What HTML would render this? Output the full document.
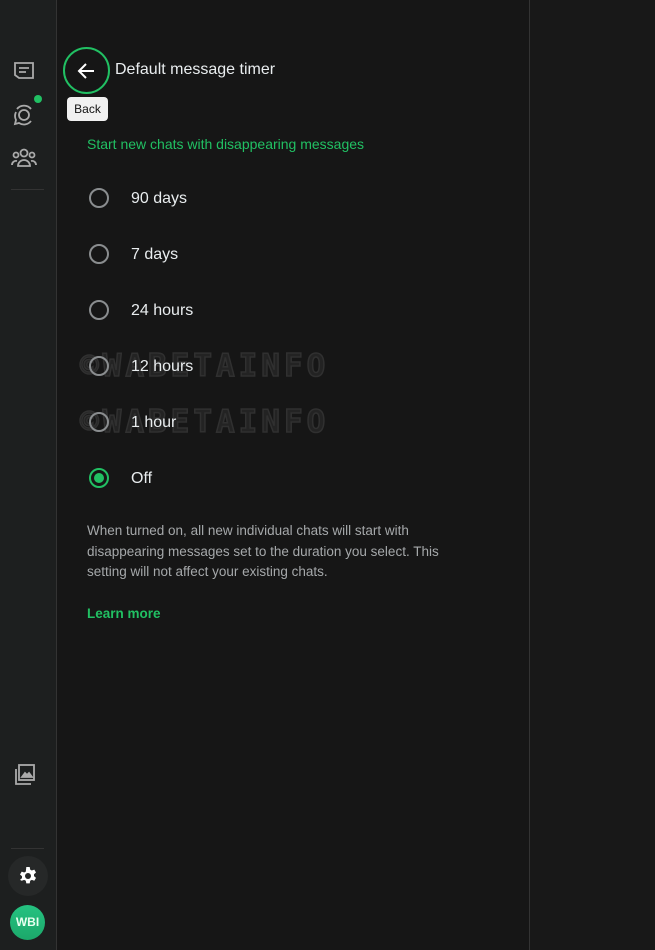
<!DOCTYPE html>
<html><head><meta charset="utf-8"><style>
*{margin:0;padding:0;box-sizing:border-box}
body{width:655px;height:950px;background:#161616;font-family:"Liberation Sans",sans-serif;position:relative;overflow:hidden;color:#e9edef}
.side{position:absolute;left:0;top:0;width:57px;height:950px;background:#1d1f1f;border-right:1px solid #333}
.right{position:absolute;left:529px;top:0;width:126px;height:950px;background:#181818;border-left:1px solid #333}
.ico{position:absolute}
.title{position:absolute;left:115px;top:61px;font-size:16px;color:#e9edef}
.back{position:absolute;left:63px;top:47px;width:47px;height:47px;border:2px solid #21c063;border-radius:50%}
.tip{position:absolute;left:67px;top:97px;width:41px;height:24px;background:#f0f0f0;border-radius:4px;color:#111;font-size:12px;text-align:center;line-height:24px}
.sub{position:absolute;left:87px;top:136px;font-size:14px;color:#21c063}
.opt{position:absolute;left:89px;font-size:16px}
.opt .r{position:absolute;left:0;top:0;width:20px;height:20px;border:2px solid #8a8d8f;border-radius:50%}
.opt .r.on{border-color:#21c063}
.opt .r.on::after{content:"";position:absolute;left:3px;top:3px;width:10px;height:10px;border-radius:50%;background:#21c063}
.opt span{position:absolute;left:42px;top:2px;white-space:nowrap}
.wm{position:absolute;left:80px;font-size:31px;font-weight:bold;letter-spacing:4px;color:#232323;-webkit-text-stroke:1.5px #303030;font-family:"DejaVu Sans Mono",monospace}
.desc{position:absolute;left:87px;top:521px;width:380px;font-size:13.5px;line-height:20.5px;color:#a5a8aa}
.learn{position:absolute;left:87px;top:606px;font-size:13.5px;font-weight:bold;color:#21c063}
</style></head><body>
<div class="side">
<svg class="ico" style="left:13px;top:61px" width="22" height="20" viewBox="0 0 22 20" fill="none" stroke="#aaa" stroke-width="1.8"><path d="M2 2h18v15H6l-4-3z"/><path d="M6 7h10M6 11h7"/></svg>
<svg class="ico" style="left:12px;top:103px" width="24" height="24" viewBox="0 0 24 24" fill="none" stroke="#aaa" stroke-width="1.8"><circle cx="12" cy="12" r="5"/><path d="M5 6a9 9 0 0 1 14 0M19 18a9 9 0 0 1-12 2l-4 1 1-4a9 9 0 0 1 0-8"/></svg>
<div class="ico" style="left:34px;top:95px;width:8px;height:8px;border-radius:50%;background:#21c063"></div>
<svg class="ico" style="left:10px;top:147px" width="28" height="22" viewBox="0 0 28 22" fill="none" stroke="#aaa" stroke-width="1.8"><circle cx="14" cy="6" r="3.5"/><circle cx="6" cy="8" r="2.5"/><circle cx="22" cy="8" r="2.5"/><path d="M8 19a6 6 0 0 1 12 0zM2 18a4 4 0 0 1 5-4M26 18a4 4 0 0 0-5-4"/></svg>
<div class="ico" style="left:11px;top:189px;width:33px;height:1px;background:#333"></div>
<svg class="ico" style="left:14px;top:764px" width="22" height="22" viewBox="0 0 22 22" fill="none" stroke="#aaa" stroke-width="1.8"><rect x="5" y="1" width="15" height="15"/><path d="M2 5v15h15"/><path d="M8 13l3-4 2 2 2-2 3 4z" fill="#aaa"/></svg>
<div class="ico" style="left:11px;top:848px;width:33px;height:1px;background:#333"></div>
<div class="ico" style="left:8px;top:856px;width:40px;height:40px;border-radius:50%;background:#262828"></div>
<svg class="ico" style="left:18px;top:866px" width="20" height="20" viewBox="0 0 20 20"><path fill="#fff" d="M8.3 1h3.4l.5 2.6 1.6.9 2.5-.9 1.7 2.9-2 1.8v1.8l2 1.8-1.7 2.9-2.5-.9-1.6.9-.5 2.6H8.3l-.5-2.6-1.6-.9-2.5.9L2 13.9l2-1.8v-1.8L2 8.5l1.7-2.9 2.5.9 1.6-.9z"/><circle cx="10" cy="10" r="3" fill="#262828"/></svg>
<div class="ico" style="left:10px;top:905px;width:35px;height:35px;border-radius:50%;background:linear-gradient(#25c281,#1ca86a);color:#e8fff0;font-size:12px;font-weight:bold;text-align:center;line-height:35px">WBI</div>
</div>
<div class="right"></div>
<div class="back"></div>
<svg class="ico" style="left:77px;top:61px" width="20" height="20" viewBox="0 0 20 20" fill="none" stroke="#fff" stroke-width="2"><path d="M17 10H3M9 3l-7 7 7 7"/></svg>
<div class="title">Default message timer</div>
<div class="tip">Back</div>
<div class="sub">Start new chats with disappearing messages</div>
<div class="wm" style="top:348px">©WABETAINFO</div>
<div class="wm" style="top:404px">©WABETAINFO</div>
<div class="opt" style="top:188px"><div class="r"></div><span>90 days</span></div>
<div class="opt" style="top:244px"><div class="r"></div><span>7 days</span></div>
<div class="opt" style="top:300px"><div class="r"></div><span>24 hours</span></div>
<div class="opt" style="top:356px"><div class="r"></div><span>12 hours</span></div>
<div class="opt" style="top:412px"><div class="r"></div><span>1 hour</span></div>
<div class="opt" style="top:468px"><div class="r on"></div><span>Off</span></div>
<div class="desc">When turned on, all new individual chats will start with disappearing messages set to the duration you select. This setting will not affect your existing chats.</div>
<div class="learn">Learn more</div>
</body></html>
